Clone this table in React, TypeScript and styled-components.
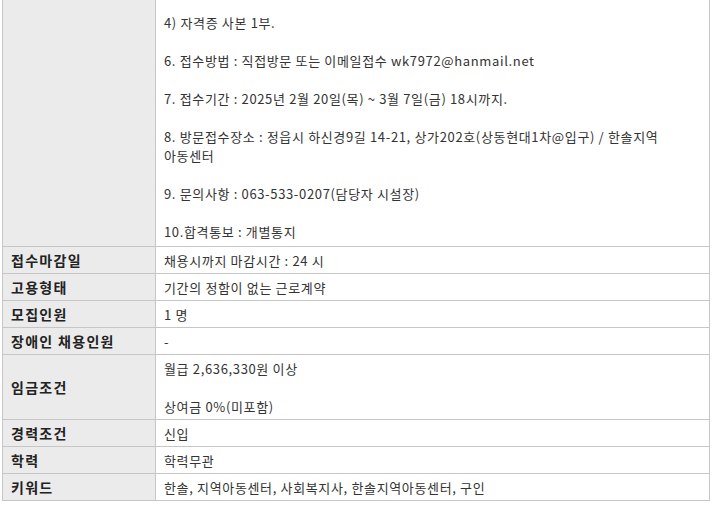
import styled, { createGlobalStyle } from "styled-components";

const GlobalStyle = createGlobalStyle`
  html, body {
    margin: 0;
    padding: 0;
    background: #ffffff;
  }
  body {
    font-family: "Noto Sans CJK KR", "Noto Sans", sans-serif;
    font-size: 13px;
    color: #333333;
  }
`;

type Row = {
  label: string;
  lines: string[];
};

const noticeLines = [
  "4) 자격증 사본 1부.",
  "",
  "6. 접수방법 : 직접방문 또는 이메일접수 wk7972@hanmail.net",
  "",
  "7. 접수기간 : 2025년 2월 20일(목) ~ 3월 7일(금) 18시까지.",
  "",
  "8. 방문접수장소 : 정읍시 하신경9길 14-21, 상가202호(상동현대1차@입구) / 한솔지역",
  "아동센터",
  "",
  "9. 문의사항 : 063-533-0207(담당자 시설장)",
  "",
  "10.합격통보 : 개별통지",
];

const rows: Row[] = [
  { label: "접수마감일", lines: ["채용시까지 마감시간 : 24 시"] },
  { label: "고용형태", lines: ["기간의 정함이 없는 근로계약"] },
  { label: "모집인원", lines: ["1 명"] },
  { label: "장애인 채용인원", lines: ["-"] },
  { label: "임금조건", lines: ["월급 2,636,330원 이상", "", "상여금 0%(미포함)"] },
  { label: "경력조건", lines: ["신입"] },
  { label: "학력", lines: ["학력무관"] },
  { label: "키워드", lines: ["한솔, 지역아동센터, 사회복지사, 한솔지역아동센터, 구인"] },
];

function Lines({ lines }: { lines: string[] }) {
  return (
    <>
      {lines.map((line, i) => (
        <Line key={i}>{line || "\u00a0"}</Line>
      ))}
    </>
  );
}

export default function App() {
  return (
    <>
      <GlobalStyle />
      <Page>
        <Table>
          <colgroup>
            <col width={153} />
            <col />
          </colgroup>
          <tbody>
            <tr>
              <Head />
              <Cell $top>
                <Lines lines={noticeLines} />
              </Cell>
            </tr>
            {rows.map((row) => (
              <tr key={row.label}>
                <Head>{row.label}</Head>
                <Cell>
                  <Lines lines={row.lines} />
                </Cell>
              </tr>
            ))}
          </tbody>
        </Table>
      </Page>
    </>
  );
}

const Page = styled.div`
  padding: 0 4px 0 2px;
`;

const Table = styled.table`
  width: 708px;
  border-collapse: collapse;
  table-layout: fixed;
  border-bottom: 1px solid #c6c6c6;
`;

const Head = styled.th`
  background: #ebebeb;
  border: 1px solid #c6c6c6;
  border-top: none;
  padding: 0 0 0 8px;
  text-align: left;
  font-size: 14px;
  font-weight: 700;
  letter-spacing: 1.3px;
  color: #222222;
  line-height: 19px;
  white-space: nowrap;
`;

const Cell = styled.td<{ $top?: boolean }>`
  border: 1px solid #c6c6c6;
  border-top: ${({ $top }) => ($top ? "none" : "1px solid #c6c6c6")};
  padding: ${({ $top }) => ($top ? "13px 8px 5px" : "4px 8px 3px")};
  vertical-align: top;
  line-height: 19px;
  letter-spacing: 0.65px;
`;

const Line = styled.div`
  white-space: nowrap;
`;
